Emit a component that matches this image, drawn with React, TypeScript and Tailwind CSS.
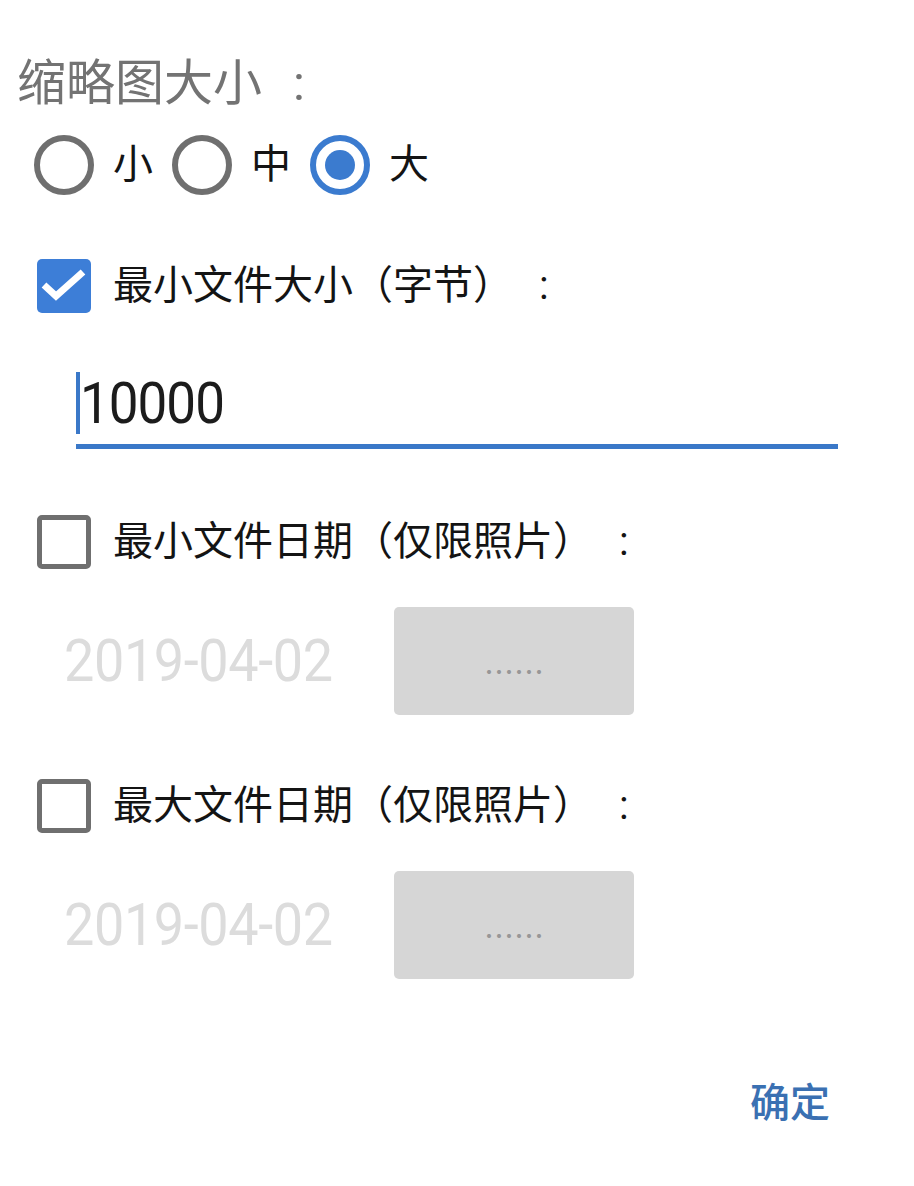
import React, { useState } from 'react';

const cjk = '[font-family:Roboto,"Noto_Sans_CJK_SC",sans-serif]';

function Colon({ gap }: { gap: string }) {
  return <span className={`${gap} [font-family:Roboto,sans-serif]`}>:</span>;
}

function Radio({ checked, label, onClick }: { checked: boolean; label: string; onClick: () => void }) {
  return (
    <button type="button" onClick={onClick} className="flex items-center">
      {checked ? (
        <span className="flex h-[60px] w-[60px] items-center justify-center rounded-full border-[6px] border-[#3b7bcf]">
          <span className="h-[30px] w-[30px] rounded-full bg-[#3b7bcf]" />
        </span>
      ) : (
        <span className="h-[60px] w-[60px] rounded-full border-[6px] border-[#6f6f6f]" />
      )}
      <span className="ml-[19px] mr-[19px] text-[40px] leading-[48px] text-[#141414]">{label}</span>
    </button>
  );
}

function Checkbox({ checked, label, onClick }: { checked: boolean; label: string; onClick: () => void }) {
  return (
    <button type="button" onClick={onClick} className="flex h-[54px] items-center pl-[37px]">
      {checked ? (
        <span className="flex h-[54px] w-[54px] items-center justify-center rounded-[5px] bg-[#3d7ed7]">
          <svg width="54" height="54" viewBox="0 0 54 54">
            <path d="M7 26 L19 37 L46 13" fill="none" stroke="#fff" strokeWidth="7" />
          </svg>
        </span>
      ) : (
        <span className="h-[54px] w-[54px] rounded-[5px] border-[5px] border-[#6f6f6f]" />
      )}
      <span className="ml-[22px] flex items-center text-[40px] leading-[48px] text-[#141414]">
        {label}
        <Colon gap="ml-[26px]" />
      </span>
    </button>
  );
}

function DateRow({ value }: { value: string }) {
  return (
    <div className="flex h-[108px] items-center">
      <span className="w-[394px] shrink-0 whitespace-nowrap pl-[64px]">
        <span className="inline-block origin-center scale-y-[1.1] text-[54px] leading-none tracking-[-0.4px] text-[#dcdcdc] [font-family:Roboto,sans-serif]">
          {value}
        </span>
      </span>
      <div className="flex h-[108px] w-[240px] shrink-0 items-end justify-center rounded-[5px] bg-[#d6d6d6] pb-[30px]">
        <span className="text-[30px] leading-none text-[#979797] [font-family:'Noto_Sans_CJK_SC',sans-serif]">
          ……
        </span>
      </div>
    </div>
  );
}

export default function App() {
  const [size, setSize] = useState('大');
  const [minSize, setMinSize] = useState(true);
  const [minDate, setMinDate] = useState(false);
  const [maxDate, setMaxDate] = useState(false);

  return (
    <div className={`flex h-[1186px] w-[914px] flex-col bg-white pt-[56px] ${cjk}`}>
      <div className="flex items-center pl-[17px] text-[49px] leading-[56px] text-[#737373]">
        缩略图大小
        <Colon gap="ml-[31px]" />
      </div>

      <div className="mt-[22px] flex h-[61px] items-center pl-[34px]">
        {['小', '中', '大'].map((s) => (
          <Radio key={s} label={s} checked={size === s} onClick={() => setSize(s)} />
        ))}
      </div>

      <div className="mt-[64px]">
        <Checkbox checked={minSize} label="最小文件大小（字节）" onClick={() => setMinSize(!minSize)} />
      </div>

      {/* input */}
      <div className="ml-[76px] mt-[55px] w-[762px]">
        <div className="flex h-[70px] items-center">
          <span className="h-[62px] w-[4px] bg-[#3a78c8]" />
          <span className="inline-block scale-y-[1.1] text-[53px] leading-none tracking-[-1px] text-[#1c1c1c] [font-family:Roboto,sans-serif]">
            10000
          </span>
        </div>
        <div className="mt-[6px] h-[5px] bg-[#3a78c8]" />
      </div>

      <div className="mt-[66px]">
        <Checkbox checked={minDate} label="最小文件日期（仅限照片）" onClick={() => setMinDate(!minDate)} />
      </div>
      <div className="mt-[38px]">
        <DateRow value="2019-04-02" />
      </div>

      <div className="mt-[64px]">
        <Checkbox checked={maxDate} label="最大文件日期（仅限照片）" onClick={() => setMaxDate(!maxDate)} />
      </div>
      <div className="mt-[38px]">
        <DateRow value="2019-04-02" />
      </div>

      <div className="mt-[105px] flex justify-end pr-[84px]">
        <button type="button" className="text-[40px] font-medium leading-[40px] text-[#3a70b2]">
          确定
        </button>
      </div>
    </div>
  );
}
